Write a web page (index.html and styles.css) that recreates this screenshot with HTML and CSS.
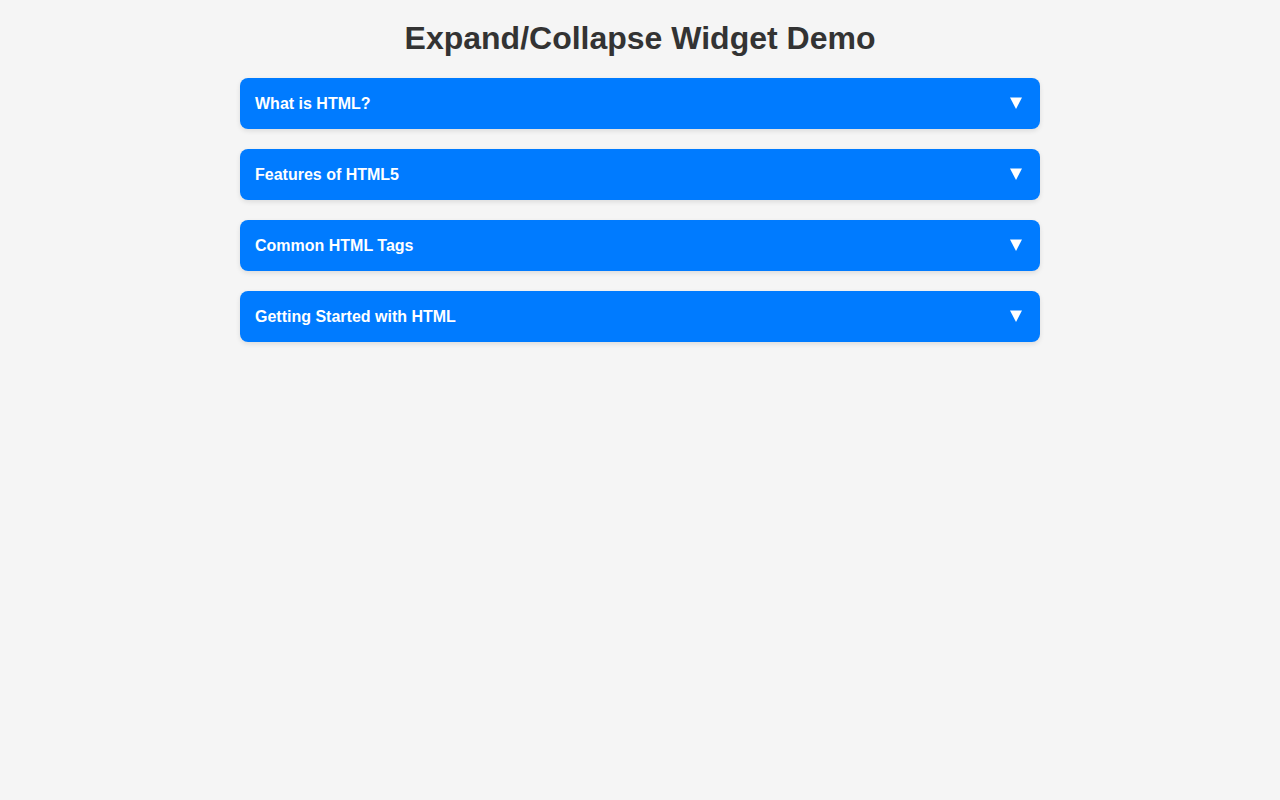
FILE: index.html
```html
<!DOCTYPE html>
<html lang="en">
<head>
  <meta charset="UTF-8">
  <meta name="viewport" content="width=device-width, initial-scale=1.0">
  <title>Expand/Collapse Widget Demo</title>
  <link rel="stylesheet" href="styles.css">
</head>
<body>
  <div class="container">
    <h1>Expand/Collapse Widget Demo</h1>

    <div class="accordion-item">
      <div class="accordion-header">
        <span>What is HTML?</span>
        <svg class="arrow" width="12" height="12" viewBox="0 0 12 12"><polygon points="0,0.5 12,0.5 6,12" /></svg>
      </div>
    </div>

    <div class="accordion-item">
      <div class="accordion-header">
        <span>Features of HTML5</span>
        <svg class="arrow" width="12" height="12" viewBox="0 0 12 12"><polygon points="0,0.5 12,0.5 6,12" /></svg>
      </div>
    </div>

    <div class="accordion-item">
      <div class="accordion-header">
        <span>Common HTML Tags</span>
        <svg class="arrow" width="12" height="12" viewBox="0 0 12 12"><polygon points="0,0.5 12,0.5 6,12" /></svg>
      </div>
    </div>

    <div class="accordion-item">
      <div class="accordion-header">
        <span>Getting Started with HTML</span>
        <svg class="arrow" width="12" height="12" viewBox="0 0 12 12"><polygon points="0,0.5 12,0.5 6,12" /></svg>
      </div>
    </div>
  </div>
</body>
</html>
```

FILE: styles.css
```css
body {
  font-family: "Liberation Sans", Arial, sans-serif;
  background-color: #f5f5f5;
  color: #333;
  margin: 0;
  padding: 20px;
}

.container {
  max-width: 800px;
  margin: 0 auto;
}

h1 {
  text-align: center;
  font-size: 32px;
  margin: 0 0 21px;
}

.accordion-item {
  margin-bottom: 20px;
  border-radius: 8px;
  box-shadow: 0 2px 5px rgba(0, 0, 0, 0.1);
}

.accordion-header {
  display: flex;
  justify-content: space-between;
  align-items: center;
  padding: 15px 18px 15px 15px;
  line-height: 21px;
  background-color: #007bff;
  color: #fff;
  font-weight: bold;
  font-size: 16px;
  border-radius: 8px;
  cursor: pointer;
}

.arrow {
  fill: #fff;
  margin-top: -1px;
}
```
